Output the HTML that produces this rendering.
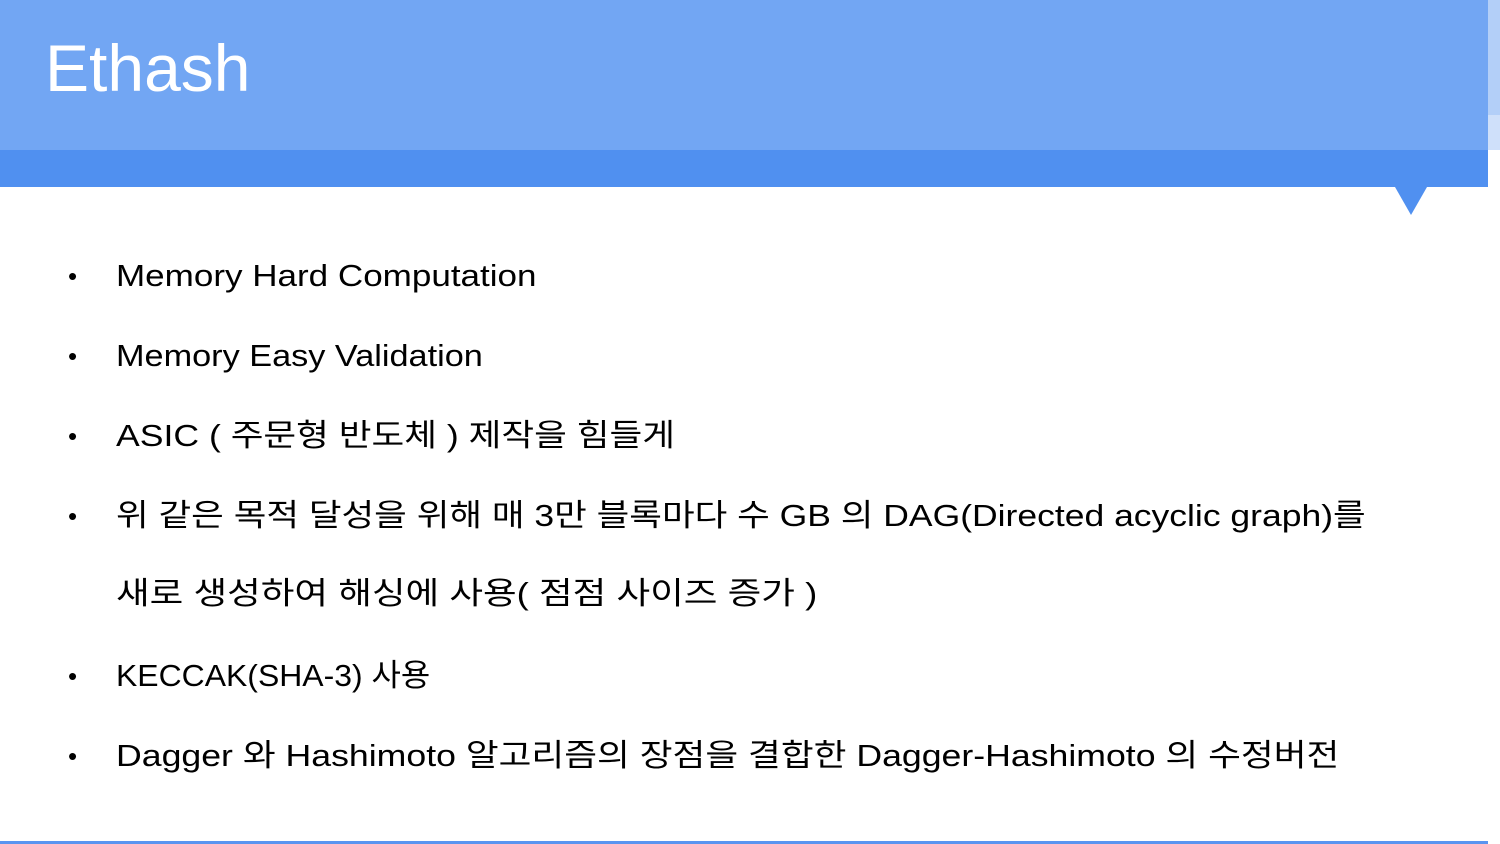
<!DOCTYPE html>
<html><head><meta charset="utf-8"><style>
body{margin:0;width:1500px;height:844px;position:relative;overflow:hidden;background:#fff;font-family:"Liberation Sans","Noto Sans CJK KR",sans-serif;}
.hd{position:absolute;left:0;top:0;width:1488px;height:150px;background:#72a6f3;}
.bd{position:absolute;left:0;top:150px;width:1488px;height:37px;background:#5090f0;}
.r1{position:absolute;left:1488px;top:0;width:12px;height:115px;background:#b3cff8;}
.r2{position:absolute;left:1488px;top:115px;width:12px;height:35px;background:#cfe0fa;}
.tri{position:absolute;left:1395px;top:187px;width:0;height:0;border-left:16px solid transparent;border-right:16px solid transparent;border-top:28px solid #5090f0;}
.title{position:absolute;left:45px;top:30px;color:#fff;font-size:66px;line-height:76px;}
.bot{position:absolute;left:0;top:841px;width:1488px;height:3px;background:#5a94f0;}
.l{position:absolute;left:116px;font-size:31px;color:#000;white-space:nowrap;line-height:40px;transform-origin:0 50%;}
.b{position:absolute;left:68px;font-size:26px;line-height:40px;}
</style></head><body>
<div class="hd"></div><div class="bd"></div><div class="r1"></div><div class="r2"></div><div class="tri"></div>
<div class="title">Ethash</div>
<div class="b" style="top:256px">•</div><div class="l" style="top:256px;transform:scaleX(1.13)">Memory Hard Computation</div>
<div class="b" style="top:336px">•</div><div class="l" style="top:336px;transform:scaleX(1.105)">Memory Easy Validation</div>
<div class="b" style="top:416px">•</div><div class="l" style="top:416px;transform:scaleX(1.148)">ASIC ( 주문형 반도체 ) 제작을 힘들게</div>
<div class="b" style="top:496px">•</div><div class="l" style="top:496px;transform:scaleX(1.145)">위 같은 목적 달성을 위해 매 3만 블록마다 수 GB 의 DAG(Directed acyclic graph)를</div>
<div class="l" style="top:574px;transform:scaleX(1.18)">새로 생성하여 해싱에 사용( 점점 사이즈 증가 )</div>
<div class="b" style="top:656px">•</div><div class="l" style="top:656px;transform:scaleX(1.03)">KECCAK(SHA-3) 사용</div>
<div class="b" style="top:736px">•</div><div class="l" style="top:736px;transform:scaleX(1.15)">Dagger 와 Hashimoto 알고리즘의 장점을 결합한 Dagger-Hashimoto 의 수정버전</div>
<div class="bot"></div>
</body></html>
